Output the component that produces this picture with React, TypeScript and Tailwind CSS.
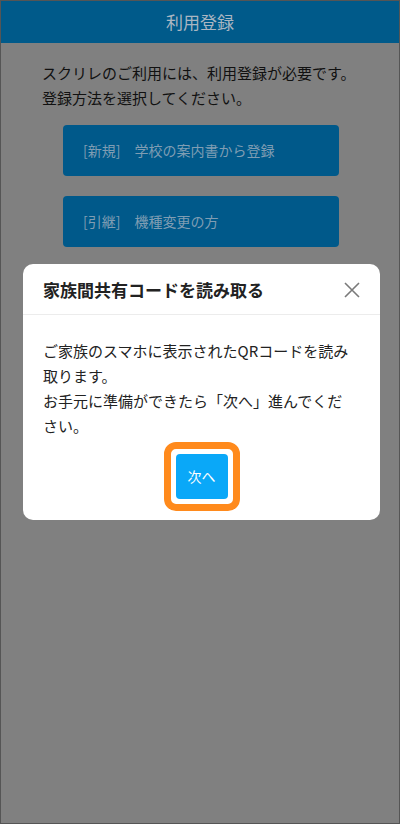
const font = { fontFamily: '"Noto Sans CJK JP", "Noto Sans", sans-serif' };

const CloseIcon = () => (
  <svg width="16" height="16" viewBox="0 0 16 16" fill="none">
    <path d="M1 1 L15 15 M15 1 L1 15" stroke="#7a7a7a" strokeWidth="1.6" />
  </svg>
);

const ShareCodeModal = () => {
  return (
    <div className="w-[357px] bg-white rounded-[10px] overflow-hidden">
      <div className="h-[51px] flex items-center justify-between pl-[20px] pr-[20px] pt-[2px] border-b border-[#ececec]">
        <h2 className="text-[17px] font-bold text-[#222]">家族間共有コードを読み取る</h2>
        <button className="w-[16px] h-[16px] flex items-center justify-center">
          <CloseIcon />
        </button>
      </div>
      <div className="pt-[23px] pb-[9px] px-[20px]">
        <p className="text-[15px] leading-[25px] text-[#222]">
          ご家族のスマホに表示されたQRコードを読み
          <br />
          取ります。
          <br />
          お手元に準備ができたら「次へ」進んでくだ
          <br />
          さい。
        </p>
        <div className="flex justify-center mt-[4px]">
          <div className="border-[7px] border-[#ff8a1c] rounded-[12px] p-[5px]">
            <button className="w-[52px] h-[45px] rounded-[4px] bg-[#0aa8f8] text-white text-[14px] flex items-center justify-center">
              次へ
            </button>
          </div>
        </div>
      </div>
    </div>
  );
};

export default function App() {
  return (
    <div
      className="relative h-[824px] w-[400px] bg-[#808080] border border-[#555] overflow-hidden"
      style={font}
    >
      <div className="h-[42px] bg-[#005a8a] flex items-center justify-center">
        <h1 className="text-[17px] text-[#aab6c2]">利用登録</h1>
      </div>

      <div className="px-[41px] pt-[17px]">
        <p className="text-[15px] leading-[25px] text-[#111] whitespace-nowrap">
          スクリレのご利用には、利用登録が必要です。
          <br />
          登録方法を選択してください。
        </p>
      </div>

      <div className="flex flex-col gap-[20px] pl-[62px] mt-[15px]">
        <div className="w-[276px] h-[51px] rounded-[4px] bg-[#00598a] flex items-center pl-[20px] text-[14px] text-[#7f9db3]">
          [新規]　学校の案内書から登録
        </div>
        <div className="w-[276px] h-[51px] rounded-[4px] bg-[#00598a] flex items-center pl-[20px] text-[14px] text-[#7f9db3]">
          [引継]　機種変更の方
        </div>
      </div>

      {/* modal over the dimmed page */}
      <div className="absolute inset-0 pt-[263px] pl-[22px]">
        <ShareCodeModal />
      </div>
    </div>
  );
}
